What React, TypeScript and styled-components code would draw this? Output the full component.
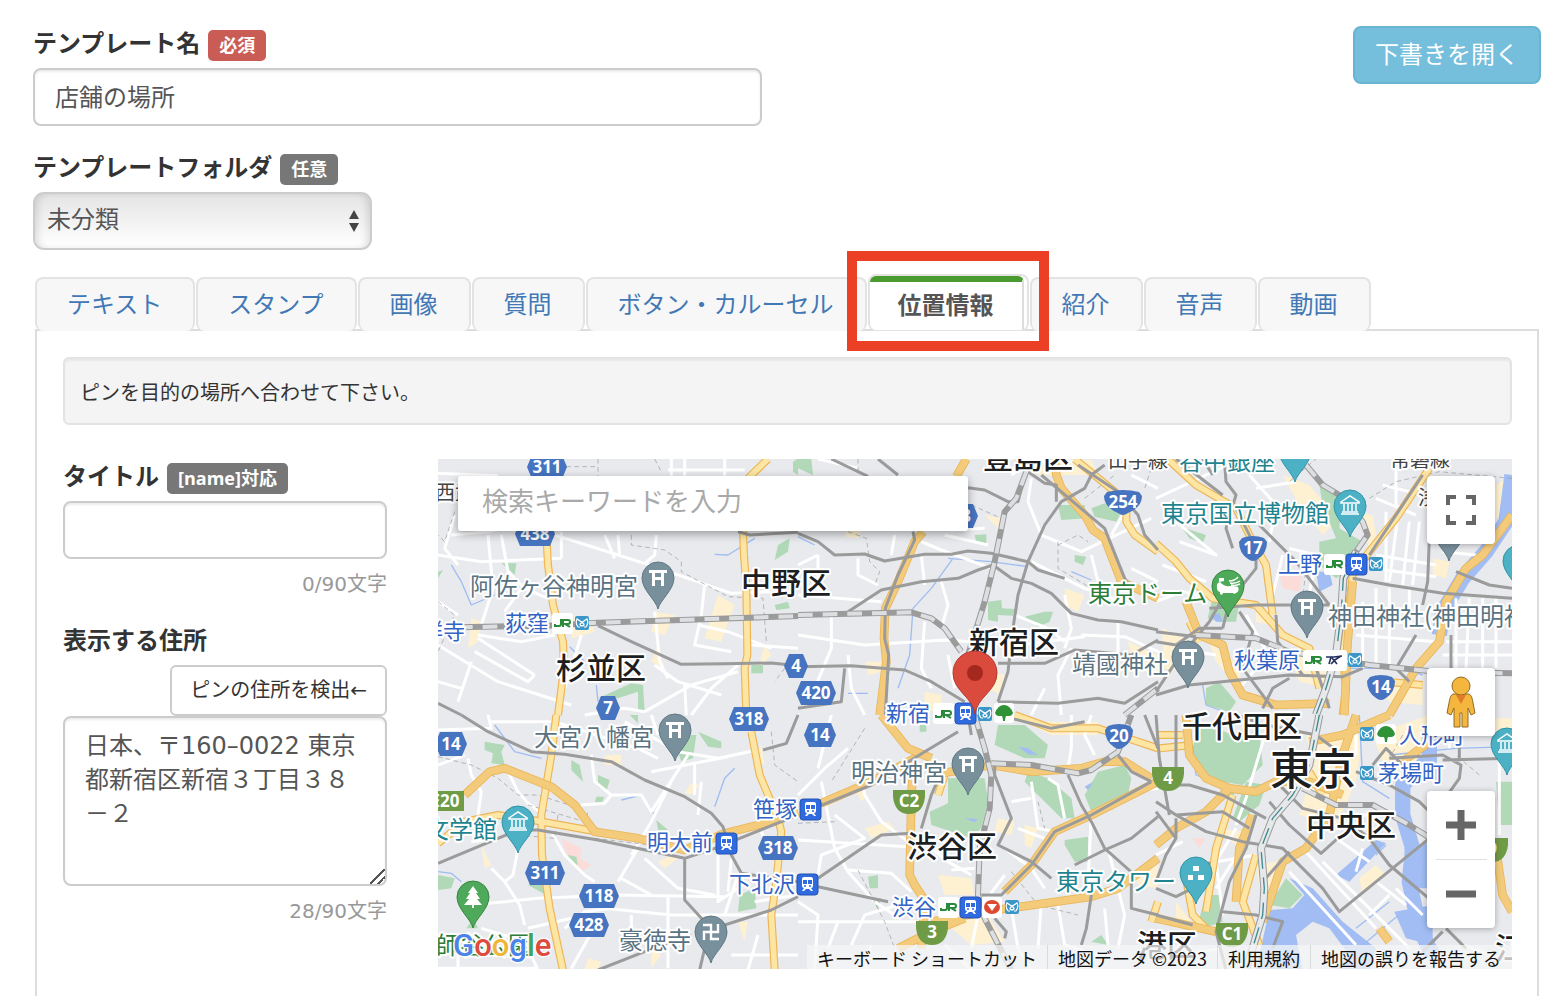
import React, { useState } from "react";
import styled, { createGlobalStyle, css } from "styled-components";

const GlobalStyle = createGlobalStyle`
  *, *::before, *::after { box-sizing: border-box; }
  body {
    margin: 0;
    background: #fff;
    color: #333;
    font-family: "DejaVu Sans", "Noto Sans CJK JP", sans-serif;
    font-size: 24px;
    line-height: 34px;
  }
  button, input, select, textarea { font: inherit; color: inherit; }
`;

/* ---------- form ---------- */

const Page = styled.main`
  display: flex;
  flex-direction: column;
  min-height: 100vh;
  padding: 26px 19px 0 33px;
`;

const Header = styled.header`
  display: flex;
  justify-content: space-between;
  align-items: flex-start;
`;

const HeaderFields = styled.div`
  display: flex;
  flex-direction: column;
  gap: 24px;
  width: 729px;
`;

const FieldHead = styled.div`
  display: flex;
  align-items: flex-start;
  gap: 8px;
  height: 42px;
`;

const FieldLabel = styled.label`
  display: block;
  font-weight: 700;
  line-height: 36px;
`;

const Badge = styled.span<{ $tone?: "danger" | "muted" }>`
  margin-top: 4px;
  padding: 0 11px;
  border-radius: 5px;
  background: ${(p) => (p.$tone === "danger" ? "#c95c54" : "#777")};
  color: #fff;
  font-family: "Open Sans", "Noto Sans CJK JP", sans-serif;
  font-size: 18px;
  font-weight: 700;
  line-height: 31px;
`;

const control = css`
  display: block;
  width: 100%;
  border: 2px solid #ccc;
  border-radius: 8px;
  background: #fff;
  color: #555;
  box-shadow: inset 0 2px 2px rgba(0, 0, 0, 0.075);
  outline: none;
`;

const TextInput = styled.input`
  ${control}
  height: 58px;
  padding: 0 20px 4px;
`;

const TextArea = styled.textarea`
  ${control}
  height: 170px;
  padding: 11px 20px 9px;
  resize: vertical;
  &::-webkit-resizer {
    background: linear-gradient(
      135deg,
      transparent 46%,
      #555 46% 54%,
      transparent 54% 72%,
      #555 72% 80%,
      transparent 80%
    );
  }
`;

const SelectWrap = styled.div`
  position: relative;
  width: 339px;
`;

const Select = styled.select`
  ${control}
  appearance: none;
  height: 58px;
  padding: 0 12px 3px;
  border-radius: 11px;
  background: linear-gradient(#e4e4e4, #fff);
  box-shadow: inset 6px 0 8px -4px rgba(0, 0, 0, 0.14), inset -6px 0 8px -4px rgba(0, 0, 0, 0.14);
`;

const SelectArrows = styled.svg`
  position: absolute;
  right: 12px;
  top: 17px;
  width: 12px;
  height: 24px;
  pointer-events: none;
`;

const DraftButton = styled.button`
  height: 58px;
  padding: 0 20px;
  border: 2px solid #68b4d1;
  border-radius: 8px;
  background: #75bedc;
  color: #fff;
  cursor: pointer;
`;

const Counter = styled.p`
  margin: 10px 0 0;
  color: #999;
  font-size: 20px;
  line-height: 30px;
  text-align: right;
`;

/* ---------- tabs ---------- */

const TabList = styled.ul`
  display: flex;
  align-items: flex-end;
  gap: 1px;
  height: 57px;
  margin: 24px 2px -2px;
  padding: 0;
  list-style: none;
`;

const TabItem = styled.li<{ $active: boolean }>`
  position: relative;
  height: ${(p) => (p.$active ? 57 : 54)}px;
  padding-right: ${(p) => (p.$active ? 3 : 0)}px;
  border: 2px solid #e3e3e3;
  border-bottom-width: ${(p) => (p.$active ? 1 : 0)}px;
  border-radius: 8px;
  background: ${(p) => (p.$active ? "#fff" : "#f7f7f7")};
`;

const TabButton = styled.button<{ $active: boolean }>`
  display: block;
  height: 100%;
  border: 0 solid #ddd;
  border-radius: 6px 6px 0 0;
  padding: 0 31px 0 30px;
  background: none;
  color: #4178b5;
  white-space: nowrap;
  cursor: pointer;
  ${(p) =>
    p.$active &&
    css`
      padding: 0 28px;
      border-top: 6px solid #4a9b2f;
      border-right: 2px solid #ddd;
      color: #555;
      font-weight: 700;
    `}
`;

const TabHighlight = styled.span`
  position: absolute;
  inset: -25px -22px -21px -23px;
  border: 10px solid #ec4026;
  pointer-events: none;
  z-index: 2;
`;

const Panel = styled.section`
  flex: 1;
  margin: 0 2px;
  padding: 26px 25px 27px 26px;
  border: solid #ddd;
  border-width: 2px 2px 0;
`;

const Notice = styled.p`
  margin: 0 0 34px;
  padding: 19px 15px 15px;
  border: 2px solid #e3e3e3;
  border-radius: 6px;
  background: #f4f4f4;
  box-shadow: inset 0 2px 2px rgba(0, 0, 0, 0.05);
  font-size: 20px;
  line-height: 30px;
`;

const Columns = styled.div`
  display: grid;
  grid-template-columns: 324px minmax(0, 1fr);
  gap: 51px;
`;

const Side = styled.div`
  display: flex;
  flex-direction: column;
`;

const AddressHead = styled.div`
  display: flex;
  flex-direction: column;
  gap: 6px;
  margin-top: 24px;
`;

const DetectButton = styled.button`
  align-self: flex-end;
  height: 51px;
  padding: 0 18px 2px;
  border: 2px solid #ccc;
  border-radius: 6px;
  background: #fff;
  font-size: 20px;
  cursor: pointer;
`;

/* ---------- map chrome ---------- */

const MapFrame = styled.div`
  position: relative;
  height: 510px;
  overflow: hidden;
  background: #e8eaed;
`;

const MapCanvas = styled.svg`
  display: block;
  width: 100%;
  height: 100%;
  font-family: "Noto Sans CJK JP", sans-serif;
`;

const SearchInput = styled.input`
  position: absolute;
  left: 20px;
  top: 17px;
  width: 510px;
  height: 55px;
  padding: 0 24px 4px;
  border: 0;
  border-radius: 3px;
  background: #fff;
  font-size: 26px;
  box-shadow: 0 3px 10px rgba(0, 0, 0, 0.35);
  outline: none;
  &::placeholder { color: #a9a9a9; opacity: 1; }
`;

const Controls = styled.div`
  position: absolute;
  right: 17px;
  top: 17px;
  bottom: 41px;
  display: flex;
  flex-direction: column;
`;

const ControlCard = styled.div<{ $push?: boolean }>`
  display: flex;
  flex-direction: column;
  margin-top: ${(p) => (p.$push ? "auto" : "0")};
  border-radius: 4px;
  background: #fff;
  box-shadow: 0 1px 6px rgba(0, 0, 0, 0.3);
  & + & + & { margin-top: 55px; }
`;

const ControlButton = styled.button`
  display: grid;
  place-items: center;
  width: 68px;
  height: 68px;
  padding: 0;
  border: 0;
  background: none;
  cursor: pointer;
`;

const Divider = styled.hr`
  width: 51px;
  height: 1px;
  margin: 0 auto;
  border: 0;
  background: #e0e0e0;
`;

const Attribution = styled.div`
  position: absolute;
  right: 0;
  bottom: 0;
  display: flex;
  height: 24px;
  padding: 0 1px 0 0;
  background: rgba(245, 245, 245, 0.75);
  color: #111;
  font-family: "Noto Sans CJK JP", sans-serif;
  font-size: 18px;
  line-height: 26px;
  white-space: nowrap;
  a { color: inherit; text-decoration: none; }
  button { padding: 0; border: 0; background: none; line-height: inherit; }
  > * { padding: 0 10px; }
  > * + * { border-left: 1px solid rgba(0, 0, 0, 0.1); }
`;

const Credit = styled.span`
  display: block;
`;

const Logo = styled.div`
  position: absolute;
  left: 15px;
  bottom: 6px;
  font-family: Roboto, sans-serif;
  font-size: 31px;
  font-weight: 500;
  line-height: 34px;
  text-shadow: 0 0 2px #fff, 1px 1px 1px #fff, -1px -1px 1px #fff, 1px -1px 1px #fff, -1px 1px 1px #fff;
`;

const Letter = styled.span<{ $c: string }>`
  color: ${(p) => p.$c};
`;

/* ---------- map data: six sheets, three units to one screen pixel ---------- */

interface Sheet {
  x: number;
  y: number;
  urban: string;
  pink?: string;
  park: string;
  water?: string;
  river?: string;
  stream?: string;
  minor: string;
  arterial: string;
  motorway: string;
  rail: string;
  jr: string;
  express?: string;
  border: string;
}

const sheets: Sheet[] = [
  {
    x: 0,
    y: -12,
    urban:
      "M650 470L710 480L680 540L640 530ZM840 420L890 450L850 560L800 550ZM660 570L680 640L640 620ZM100 490L130 500L120 560L90 580ZM410 480L460 500L470 530L400 550ZM980 570L1000 600L960 640Z",
    park: "M1020 270L1055 250L1050 290L1010 315ZM1010 450L1050 440L1055 460L1015 465ZM480 730L580 685L615 690L620 770L600 770L600 710L540 730ZM190 325H235L230 360L215 345ZM940 630H975V655H940ZM1065 20L1080 10V60L1065 50ZM0 350L15 345L0 370Z",
    stream: "M830 298L870 300L950 250M40 330L70 380L100 450L170 420M395 575L440 620M475 690L480 740",
    minor:
      "M0 55L180 62M40 240L150 230L330 190M0 300L130 320L370 310M370 230V310M150 240L165 400L130 510M350 240L620 325L880 415L1000 410M700 12V64M740 12V64M860 12V64M690 45H920M500 240L530 310M540 240L545 300M655 240L650 300L620 325M800 390L790 480L770 570L880 590M650 470L665 620L690 670M650 630L720 680L850 720M0 570L180 680L400 750M120 550L290 660M290 660L270 680L110 590M100 620L60 740M0 680L70 700M430 540L400 640L380 700M780 510L870 530L1000 580M940 570L1080 580M900 630L820 700L760 780M440 780L560 760L620 770M190 240L210 350L260 400L330 430M0 440L60 480M250 400L200 470M350 540L250 560L120 540M50 180L20 280L60 330M740 690L745 780M620 770L760 690L900 650",
    arterial:
      "M990 12L930 70L915 230L918 300L925 400L928 600L920 640L925 780M325 240L330 330L345 450L375 560L378 640L360 780",
    motorway: "",
    rail: "M480 512L580 560L730 628L860 626L1000 624L1080 632M0 745L70 780M900 230L935 240L1080 232",
    jr: "M60 517L330 512L480 503L1080 483",
    border:
      "M480 12V70M385 35H480M650 12L670 50M580 240V270L680 285L730 320V350L870 425L975 430L985 560M50 170L20 260L0 240M0 440L50 480L0 590M1040 640L1010 680",
  },
  {
    x: 1080,
    y: -12,
    urban:
      "M560 180L610 190L600 220ZM800 400L860 420L840 470L800 450ZM200 620H250V650L210 660ZM380 710L430 720V760L380 770ZM580 650L620 660L610 720L570 700ZM990 560L1080 600V660L1010 640ZM150 220L190 225L180 250L140 245ZM720 15H880L900 60H720Z",
    park: "M530 240L565 238V270L535 262ZM780 150H860L865 190L790 195ZM880 160L920 145L970 170L955 200L890 185ZM570 440L610 435L612 460L650 462L645 482L600 480V500L570 495ZM680 485L740 470H765L755 500L720 515ZM830 300L865 305L855 330L830 320ZM0 12H40L45 60L0 40Z",
    stream: "M450 310L580 320L690 335M465 310L400 400L345 460L335 600L300 700M820 350L880 375M0 245L50 270M150 715H210",
    minor:
      "M370 260L430 285L580 340M370 300L380 390M440 240L570 270M700 70L690 140L730 240L850 290L1060 190M980 170L940 240M560 220L460 225M0 420L250 440M0 540L200 570L440 555L660 570L860 545M100 470V580L50 700M380 500L370 640L400 700M430 380L450 450L430 520M650 480L750 520L800 560M800 420L820 520L800 580M850 540L980 545L1080 590M960 500V600M820 580L780 660L790 780M740 700L700 780M150 600L160 700L200 780M640 60L700 20H830M880 300L900 380L880 420M1000 340L1080 380M60 12L180 40M60 300V420M180 310V360L240 390M0 330L60 300M450 600L470 700M290 240L280 300M1000 60L1080 100M700 320L860 400L1000 450",
    arterial: "M830 12L950 110L985 150V200L1010 240L1080 290",
    motorway:
      "M505 12L475 64M375 230L350 260L300 380L262 460L258 550L265 620L245 780M770 12L775 60L790 100L860 180L885 225L920 250L970 380L1080 430",
    rail: "M345 230L350 255L300 360L262 460L260 550L272 600L262 780M100 12L210 64M240 12L300 60M510 98L560 105L630 140H660L680 60M690 50L740 85L775 90V140M920 30L880 60L860 100L790 140L740 210L690 320L660 420L645 520L630 650L600 740M730 60L920 220L980 370L1000 400M840 30L960 110L1020 180L1040 240L1080 285M0 235L60 260L110 300L200 297L260 318L380 298H460L510 288L580 295L690 320L720 345L800 370M150 470L250 405L370 380L480 370L540 345L585 330L640 370L700 385L760 415L820 475L900 495L970 500L1080 525M0 635L160 632L320 645L400 680L500 740M140 640L130 740L0 760M600 625H740L830 585L1000 600L1080 555M600 740L780 745L900 730L980 745L1080 680",
    jr: "M685 50L655 130L620 170L590 320L560 440L510 600M0 480L340 472L400 490L440 520L490 590M980 780L1080 700",
    border:
      "M180 12V50M150 230L205 250L215 320L245 350L230 390M520 150L610 190L600 260M780 260V340L880 400M780 270L840 240L870 260M860 130L950 60M1060 40L1040 100",
  },
  {
    x: 2154,
    y: -12,
    urban:
      "M380 60L460 90L520 160L540 200L500 240L430 150ZM600 170L650 180L660 240L640 280L610 200ZM390 580L500 600L520 700L430 680ZM830 310L880 320L870 370L830 360ZM970 120L1068 60V150L1010 200ZM20 520L110 560L90 650L20 640ZM650 670L800 700V750L700 740ZM300 470L340 460V510L300 500ZM160 560L260 640L240 690L180 620Z",
    pink: "M370 360L440 355L430 410L380 400Z",
    park: "M490 90L560 130L550 220L620 260L590 340L540 370L490 330V260L540 250L500 150ZM75 215L150 240L140 265L100 250ZM170 430L250 440L240 500H190L155 490ZM1068 180L990 270L960 310L1000 300L1068 210ZM150 700L190 680L240 740L220 770L150 750Z",
    water: "M480 350H520L530 390L490 410ZM165 480L190 475L200 500L180 500Z",
    river: "M1068 60L1050 200L990 290L920 370L860 470L850 540",
    stream: "M140 690L150 750L230 780M560 640H740L800 660",
    minor:
      "M690 170V380M730 150L700 380M760 200L740 390M790 200L770 390M660 300L840 330M650 340L840 365M600 480L850 520M600 540L840 560M620 440V640M660 400V640M700 400V640M760 400V520M900 430V640M940 430L930 640M980 430V640M1020 430V640M870 560H1068M860 600H1068M860 500H1068M0 130L150 60L260 12M20 330L150 380M60 200L180 300L70 260M280 60L360 150L340 260M300 100L420 80M400 280L480 300L460 420M380 300L350 420M0 440L80 410L200 440M60 580L180 600M270 480L360 640M900 100L1000 120M860 290L960 300M250 700L300 640M660 130L780 180M680 90L760 110M720 40V160",
    arterial:
      "M35 12L120 90L240 160L290 260L330 330L350 480M0 265L60 320L100 370L170 430L300 450L380 540L460 580L490 700M820 40L720 190L640 290L590 360L575 500L560 600L570 700L560 780M690 680L800 690M100 500L130 560",
    motorway:
      "M90 440L130 540L200 570L220 650L260 720L360 750L520 745M1068 180L980 300L930 340L870 440L850 560L780 640L700 780M590 380L575 560L565 780",
    rail: "M205 12L210 80L240 120L210 220L230 280M60 12L200 120M310 210L420 320L520 450M590 370L700 390L860 415L1068 430M820 250L815 380L800 450M0 530L120 545M0 710L60 620L160 500L200 430M160 460L300 450L520 450M200 520L220 440L300 340V280L240 160M360 480L365 560L440 660M0 720L100 690L400 660L560 665L620 640M260 640L350 760M900 350L1000 390L1068 400M885 540V640M800 60L640 300M780 540L720 640L760 680M320 760L350 700L400 670M250 470L290 530L260 640M0 560L60 570L130 520L200 520M140 12L170 60M480 640L520 760",
    jr: "M450 30L500 90L550 120L620 200L635 240L600 290L565 370L555 480L540 600M120 540L300 550L400 590L640 630L840 650L1068 655",
    express: "M600 290L562 370L555 480L540 600L510 700L480 780",
    border: "M400 80L480 12M640 130L720 80L850 50L1068 70M450 330L440 440",
  },
  {
    x: 0,
    y: 768,
    urban:
      "M130 390L160 450L140 460ZM760 205L785 210L760 240L740 235ZM450 730L490 740L480 765H440ZM970 90L980 150L950 130ZM900 620H930L920 680ZM640 700L670 720L640 760ZM500 120H550V150H500ZM660 440L700 420L720 430L680 460Z",
    pink: "M370 370L430 400L425 430L460 450L430 470L390 430Z",
    park: "M140 80L200 90L190 110L200 150L160 145L165 115L140 105ZM400 135L425 150L435 200L400 165ZM480 180L515 195L505 230L480 215ZM720 110L760 60H775L765 130L730 140ZM780 50L850 80V100L810 95ZM475 245H500L490 265H470ZM655 315L690 345H660ZM905 540L950 520L955 580L900 590ZM0 480L50 490L40 520L0 525ZM270 510L320 490L325 540ZM575 0H600V25ZM390 420L415 425L420 450L400 445ZM85 640L105 610L120 640Z",
    stream: "M0 470L40 475L70 500M890 160L860 190L830 275M550 255L610 240L650 300M170 30L230 110L310 130",
    minor:
      "M150 0L160 40L0 45M90 130L100 180L130 230L120 300M200 150L240 230L270 265L320 300M460 120L470 200L520 240L500 265L430 270M520 240H610L640 290L750 120M350 20L600 100L660 130M560 20L720 110L840 130L960 105M640 170L870 125M770 140V240M580 420L640 320L700 200M240 400L225 480L200 500M160 460L200 500L245 570L260 630M150 565L300 550L540 540L860 545M340 350L380 420L440 480L470 500M380 640L440 590L520 580M500 580L700 600H1080M550 490L640 540M270 640L400 610M400 760L490 600M540 500L600 400M690 540V760M620 430L720 520L830 540M840 420V560L900 520M880 430L870 530M900 480L860 600M950 560L1080 540M960 660L930 765M880 720H1080M0 760H300M60 720V765M130 640L260 680L300 765M580 600V700M790 200L780 300M970 350L1000 420M100 380L180 370M0 150L80 120M160 20L340 20M640 0L660 60",
    arterial:
      "M355 0L340 120L310 300L312 420L335 580L375 765M0 385L80 320L180 300L300 318L450 345L480 350M940 50L965 180L1020 310L1030 350L1015 500L1000 600L1010 765",
    motorway: "M80 240L155 170L200 160L340 215L410 270L470 350L600 370L740 405L860 355L980 325L1080 290",
    rail: "M70 0L150 50L280 110L380 118L520 140L620 195L740 245L820 295L855 335L880 420L910 475L1080 500M0 445L240 345H300L480 375L740 430L830 400L1080 300M740 430V555L800 620M480 765L620 710L760 660M860 630L1000 585L1080 545M800 700L785 765M1080 0L1045 85L975 105",
    jr: "",
    border:
      "M0 125L100 150L180 190L240 240H300L440 285M270 270L440 320L450 290M360 300L350 370L240 360M470 370L640 390M1000 50L1010 150L1080 200",
  },
  {
    x: 1080,
    y: 768,
    urban:
      "M200 340L270 320L290 340L220 370ZM420 480L520 490L530 540H440ZM460 600H570L620 680L520 690L460 640ZM680 330L720 340L700 400L680 390ZM1010 480L1080 450V520L1020 510ZM170 220L210 240L190 260ZM600 310L650 320L640 360L590 350ZM680 20H900V60H760Z",
    park: "M600 30H680L750 90L740 130H680L590 90ZM450 190H560L570 260L550 340L520 370L400 330L395 290L450 265ZM690 170L750 190L820 250L830 310H790L750 270L680 200ZM860 240L900 170L980 150L1000 190L990 240L880 290ZM800 375L870 365V440H830L800 390ZM210 485L240 480V520H215ZM220 550H250L240 580ZM365 30H385V50H365ZM880 680L910 660L930 690Z",
    water: "M660 95L690 100L720 120L690 118ZM500 310L540 312L530 322ZM860 215L885 200L870 225Z",
    minor:
      "M0 375L330 395M70 200L110 400L150 470L230 560L290 600M0 240L80 160L150 100M100 0L60 160M190 180L200 240L250 320L330 380M110 300L200 370L70 420L60 480M150 465L280 475L340 530M0 620H380M0 560L60 600L50 765M160 690L200 600L300 570M400 400L450 440L520 480M460 465L530 460M620 400L700 460L740 520M660 340L740 370M700 200L720 340L770 350M820 0V100L810 160M880 0L860 60L890 120M640 260L700 250M640 580L660 700L700 765M540 600L520 700M730 560L720 700M780 570L800 690L900 720M880 300L870 500M930 400L980 600L960 700M620 480L560 560M1000 230L1080 220M920 580L930 690M200 765L220 690M440 690L520 765M750 190L780 210L800 310M120 620L90 700",
    arterial: "M650 0L760 40H900L960 60L1080 100M440 180L420 240M1080 560L1060 620",
    motorway:
      "M250 0L330 100L400 130M345 130L340 260L335 480L350 510L390 570L375 620L370 700M70 265L210 205L350 130M400 620L560 590L880 545L960 520L1080 430M300 700L400 650L500 610M400 180L580 150L700 170L850 160L920 140H980L1060 190M1080 200L880 300L770 350L700 450L620 530",
    rail: "M60 275L220 210L380 110L480 50M60 490L250 360L340 355M60 515L270 560M430 170L400 240L370 340M590 150V180L640 310L600 390L700 440L760 490M1060 200L880 300L770 350L700 450L610 540H550M590 610L625 650L620 670M810 180L850 270L880 320L920 400L1010 480M830 450L920 405L1000 370L1080 305M960 120L1000 170L1060 200M880 540L865 640L850 690M510 0L520 60M1000 500V580L1080 600M640 10L760 40L860 20M1040 0L1080 100",
    jr: "M530 0L560 100L580 180L575 280L545 400L540 540L560 610L640 765M580 145L700 150L840 175L880 165L960 110L1000 0",
    border: "M0 325L110 320M200 40L100 200M180 465L260 620L290 700M720 260L740 340M640 470L720 570L840 600",
  },
  {
    x: 2154,
    y: 768,
    urban:
      "M450 60H620L600 200L540 330L430 300L470 160ZM610 490L660 450L690 480L620 540ZM180 340L270 350L250 400ZM60 560L120 640H60ZM650 60L820 0L780 140H680ZM940 10H1068V60H940ZM300 450L360 440L380 500L320 580Z",
    pink: "M110 370H150L130 400Z",
    park: "M130 20L230 60L310 50L320 150L260 210L200 200L130 180L110 100ZM270 200L330 210L310 270L250 320L230 310ZM150 540H190L200 620L140 640L130 610ZM390 490L440 540L400 580L340 570ZM1020 200H1068V330H1030ZM180 240L230 220L240 260Z",
    water:
      "M340 585L410 580L445 540L400 490L470 520L560 620L660 700L640 765H540L580 720L520 640L470 620L420 660L440 765H300ZM660 375L690 385L580 500L540 480ZM715 590L830 570V690L750 670ZM745 400L830 380V520H765Z",
    river: "M820 60V130L740 210V300L770 400L760 500L790 640L830 720",
    stream: "M700 120L900 100L1068 95M610 0L620 200L700 250M110 90L120 180L200 210L260 215M660 420L690 390M600 640L700 560M620 690L740 590M840 60V200",
    minor:
      "M180 440L300 420M400 470L600 690M440 400L660 640M500 440L760 700M560 300H700M540 370L640 440M620 400L600 470M80 380L0 420M240 340L180 440L200 600M330 50L270 250L240 330M0 730L200 700M920 690L1068 740M660 500L750 570M720 520L800 600M1030 100V360M880 0V100M600 20V120M280 360L180 520M700 540L640 600M1000 20V60",
    arterial:
      "M90 490L110 600L150 640M230 240L180 400L150 590M10 100L110 90M300 420L260 560L310 690M460 170L500 240M0 60H80",
    motorway:
      "M90 0L100 120L150 190L220 220L150 290L60 340L0 390M220 220L300 230L360 200H460L560 240M540 210L520 300L450 400L380 440L320 620M460 80L560 60L700 0M0 610L180 650M1020 400L1040 540L1068 590M670 640L700 680M740 140L820 80M600 0L560 120L520 300M290 300L250 400L240 560",
    rail: "M0 0L10 130L40 300M0 210H100L200 240L330 310M0 260L60 300L200 290L280 340M0 290L60 370M60 300L150 350L260 380L380 400L500 520L550 590L820 370M60 310V370L30 420L0 500M340 260L400 330L495 415L590 330L640 370L700 450L830 560M240 0L330 30L480 60L560 120M300 300L270 400L220 500L180 650L210 765M0 520L60 545L150 500L160 440M860 650L800 710M870 640L930 700M600 170L700 210L790 260L830 300M700 130L860 120L915 150L910 190L860 260M200 590L300 600L380 620L350 700M400 410L320 500M860 135L1068 130M0 600L110 630M650 150L690 100L740 150M910 0V140M60 200V0M360 200L440 280L560 310",
    jr: "M440 220L540 270H650L760 330L840 380",
    express: "M490 0L460 150L410 240L350 310L315 400L325 520L320 600L270 765",
    border: "M740 60L700 130M970 180L900 120",
  },
];

type Layer = Exclude<keyof Sheet, "x" | "y">;

const Layered = ({ of, ...paint }: { of: Layer } & React.SVGProps<SVGPathElement>) => (
  <>
    {sheets.map((s) =>
      s[of] ? <path key={`${s.x}-${s.y}`} d={s[of]} transform={`translate(${s.x} ${s.y})`} {...paint} /> : null
    )}
  </>
);

type Place = [text: string, x: number, cy: number, kind: PlaceKind, size?: number];
type PlaceKind = "ward" | "poi" | "museum" | "park" | "station" | "line";

const placeStyle: Record<PlaceKind, { fill: string; size: number; weight: number }> = {
  ward: { fill: "#1d1e20", size: 30, weight: 500 },
  poi: { fill: "#5a7382", size: 24, weight: 400 },
  museum: { fill: "#1f848f", size: 24, weight: 400 },
  park: { fill: "#2c7d37", size: 24, weight: 400 },
  station: { fill: "#3263c4", size: 22, weight: 400 },
  line: { fill: "#444", size: 20, weight: 400 },
};

const places: Place[] = [
  ["豊島区", 983, 457, "ward"],
  ["中野区", 741, 583, "ward"],
  ["杉並区", 556, 668, "ward"],
  ["新宿区", 969, 642, "ward"],
  ["渋谷区", 907, 846, "ward"],
  ["千代田区", 1182, 726, "ward"],
  ["中央区", 1306, 825, "ward"],
  ["港区", 1137, 945, "ward"],
  ["東京", 1270, 769, "ward", 43],
  ["江", 1495, 948, "ward"],
  ["阿佐ヶ谷神明宮", 470, 586, "poi"],
  ["大宮八幡宮", 534, 737, "poi"],
  ["明治神宮", 851, 772, "poi"],
  ["豪徳寺", 619, 940, "poi"],
  ["靖國神社", 1072, 664, "poi"],
  ["神田神社(神田明神)", 1328, 616, "poi"],
  ["東京国立博物館", 1161, 513, "museum"],
  ["谷中銀座", 1179, 461, "museum"],
  ["文学館", 425, 829, "museum"],
  ["東京タワー", 1056, 881, "museum"],
  ["東京ドーム", 1088, 593, "park"],
  ["師谷公園", 436, 945, "park"],
  ["荻窪", 505, 623, "station"],
  ["祥寺", 421, 631, "station"],
  ["新宿", 886, 713, "station"],
  ["上野", 1278, 564, "station"],
  ["秋葉原", 1234, 660, "station"],
  ["人形町", 1399, 735, "station"],
  ["茅場町", 1378, 773, "station"],
  ["笹塚", 753, 809, "station"],
  ["明大前", 647, 842, "station"],
  ["下北沢", 729, 884, "station"],
  ["渋谷", 892, 907, "station"],
  ["西武", 435, 492, "line"],
  ["山手線", 1108, 460, "line"],
  ["常磐線", 1390, 459, "line"],
  ["浅", 1418, 497, "line"],
];

const prefectural: [string, number, number][] = [
  ["311", 547, 467],
  ["438", 535, 534],
  ["8", 966, 516],
  ["4", 796, 666],
  ["420", 816, 693],
  ["7", 608, 708],
  ["318", 749, 719],
  ["14", 820, 735],
  ["14", 451, 744],
  ["318", 778, 848],
  ["311", 545, 873],
  ["118", 599, 896],
  ["428", 589, 925],
];
const national: [string, number, number][] = [
  ["254", 1123, 502],
  ["17", 1253, 548],
  ["14", 1381, 687],
  ["20", 1119, 736],
];
const expressway: [string, number, number][] = [
  ["C2", 909, 801],
  ["3", 932, 932],
  ["4", 1168, 778],
  ["C1", 1232, 934],
  ["9", 1492, 849],
];

type Glyph = "torii" | "museum" | "tree" | "manji" | "dots" | "dome" | "none";
const pins: [Glyph, number, number, string, string][] = [
  ["torii", 658, 578, "#78909c", "#5f7683"],
  ["torii", 675, 730, "#78909c", "#5f7683"],
  ["torii", 968, 764, "#78909c", "#5f7683"],
  ["manji", 711, 932, "#78909c", "#5f7683"],
  ["torii", 1188, 657, "#78909c", "#5f7683"],
  ["torii", 1307, 607, "#78909c", "#5f7683"],
  ["none", 1449, 530, "#78909c", "#5f7683"],
  ["museum", 518, 822, "#4db1c6", "#2f93a8"],
  ["museum", 1350, 506, "#4db1c6", "#2f93a8"],
  ["none", 1295, 451, "#4db1c6", "#2f93a8"],
  ["museum", 1507, 744, "#4db1c6", "#2f93a8"],
  ["none", 1519, 561, "#4db1c6", "#2f93a8"],
  ["dots", 1196, 873, "#4db1c6", "#2f93a8"],
  ["tree", 473, 897, "#4fa95a", "#35853f"],
  ["dome", 1228, 586, "#4fa95a", "#35853f"],
];

const PinGlyph = ({ kind }: { kind: Glyph }) => {
  switch (kind) {
    case "torii":
      return <path d="M-9 -8H9V-5H6V8H3V2H-3V8H-6V-5H-9ZM-3 -5V-1H3V-5Z" fill="#fff" fillRule="evenodd" />;
    case "museum":
      return (
        <path
          d="M-9 -4L0 -10L9 -4V-3H-9ZM-8 6H8M-9 8H9M-6 -2V5M-2 -2V5M2 -2V5M6 -2V5"
          fill="none"
          stroke="#fff"
          strokeWidth="1.5"
        />
      );
    case "tree":
      return <path d="M0 -11L5 -4H3L7 2H4L9 8H1V11H-1V8H-9L-4 2H-7L-3 -4H-5Z" fill="#fff" />;
    case "manji":
      return <path d="M-8 -7H0V7H8M-7 8V0H7V-8" fill="none" stroke="#fff" strokeWidth="2.4" />;
    case "dots":
      return <path d="M-3 -7H3V-2H-3ZM-8 2H-3V7H-8ZM2 2H8V7H2Z" fill="#fff" />;
    case "dome":
      return (
        <>
          <path
            d="M-11 2Q-12 -3 -8 -4Q-4 1 2 0Q8 0 10 1Q12 5 8 7L6 8L5 7H-5L-6 9L-8 8V6Q-11 5 -11 2ZM-9 -8H-4V-5L-9 -4Z"
            fill="#fff"
          />
          <path d="M1 -5Q7 -5 10 -9M2 -3Q8 -2 12 -5M3 -1Q8 0 12 -2" fill="none" stroke="#fff" strokeWidth="1.4" />
        </>
      );
    default:
      return null;
  }
};

const trains: [number, number][] = [
  [1356, 564],
  [965, 713],
  [810, 809],
  [726, 843],
  [807, 884],
  [970, 907],
];
const metros: [number, number][] = [
  [582, 623],
  [985, 714],
  [1376, 564],
  [1355, 660],
  [1367, 734],
  [1367, 773],
  [1012, 907],
];
const jrMarks: [number, number][] = [
  [562, 623],
  [943, 714],
  [1334, 564],
  [1313, 660],
  [948, 907],
];

/* white plates behind the operator marks: x, y, width */
const plates: [number, number, number][] = [
  [552, 613, 21],
  [933, 703, 21],
  [1324, 554, 21],
  [1303, 650, 44],
  [938, 897, 21],
  [982, 897, 20],
];

const CityMap = () => (
  <MapCanvas viewBox="0 0 3222 1530" preserveAspectRatio="xMidYMid slice" role="img" aria-label="地図">
    <g strokeLinejoin="round" strokeLinecap="butt">
      <Layered of="urban" fill="#fdf1d2" />
      <Layered of="pink" fill="#fbdcd9" />
      <Layered of="park" fill="#b1d9b8" />
      <Layered of="water" fill="#a1bdf3" />
      <Layered of="river" fill="none" stroke="#a1bdf3" strokeWidth="46" />
      <Layered of="stream" fill="none" stroke="#9fbdf2" strokeWidth="4" />
      <Layered of="minor" fill="none" stroke="#fff" strokeWidth="9" />
      <Layered of="border" fill="none" stroke="#999" strokeWidth="2" strokeDasharray="14 10" />
      <Layered of="arterial" fill="none" stroke="#edb557" strokeWidth="24" />
      <Layered of="arterial" fill="none" stroke="#fde6a4" strokeWidth="17" />
      <Layered of="motorway" fill="none" stroke="#e9b558" strokeWidth="26" />
      <Layered of="motorway" fill="none" stroke="#f3cb7b" strokeWidth="21" />
      <Layered of="rail" fill="none" stroke="#9b9b9b" strokeWidth="9" />
      <Layered of="jr" fill="none" stroke="#9b9b9b" strokeWidth="18" />
      <Layered of="jr" fill="none" stroke="#dcdee1" strokeWidth="12" strokeDasharray="44 30" />
      <Layered of="express" fill="none" stroke="#9b9b9b" strokeWidth="24" />
      <Layered of="express" fill="none" stroke="#e6e8ea" strokeWidth="18" />
      <Layered of="express" fill="none" stroke="#3d8a90" strokeWidth="4" strokeDasharray="50 26" />
    </g>

    <g transform="scale(3) translate(-438 -459)">
      {plates.map(([x, y, w]) => (
        <rect key={`${x}-${y}`} x={x} y={y} width={w} height="21" rx="3" fill="#fff" />
      ))}

      {pins.map(([kind, x, y, fill, edge]) => (
        <g key={`${x}-${y}`} transform={`translate(${x} ${y})`}>
          <path
            d="M0 31C-2 22 -16 12 -16 0A16 16 0 1 1 16 0C16 12 2 22 0 31Z"
            fill={fill}
            stroke={edge}
            strokeWidth="1"
          />
          <PinGlyph kind={kind} />
        </g>
      ))}

      {places.map(([text, x, cy, kind, size]) => {
        const look = placeStyle[kind];
        const px = size ?? look.size;
        return (
          <text
            key={text}
            x={x}
            y={cy + Math.round(px * 0.38)}
            fontSize={px}
            fontWeight={look.weight}
            fill={look.fill}
            stroke="#fff"
            strokeWidth="4"
            strokeLinejoin="round"
            paintOrder="stroke"
          >
            {text}
          </text>
        );
      })}

      <g fontFamily="Open Sans, sans-serif" fontSize="17" fontWeight="700" fill="#fff" textAnchor="middle">
        {prefectural.map(([n, x, y]) => {
          const w = 7 + n.length * 4;
          return (
            <g key={`${x}-${y}`} transform={`translate(${x} ${y})`}>
              <path d={`M${-w + 4} -12H${w - 4}L${w + 1} 0L${w - 4} 12H${-w + 4}L${-w - 1} 0Z`} fill="#4674c0" />
              <text y="6">{n}</text>
            </g>
          );
        })}
        {national.map(([n, x, y]) => {
          const w = n.length > 2 ? 19 : 14;
          return (
            <g key={`${x}-${y}`} transform={`translate(${x} ${y})`}>
              <path
                d={`M${-w + 3} -10Q0 -14 ${w - 3} -10L${w} -6Q${w} 5 5 11Q0 15 -5 11Q${-w} 5 ${-w} -6Z`}
                fill="#4674c0"
              />
              <text y="6">{n}</text>
            </g>
          );
        })}
        {expressway.map(([n, x, y]) => (
          <g key={`${x}-${y}`} transform={`translate(${x} ${y})`}>
            <path d="M-16 -11H16V-4Q14 13 0 13Q-14 13 -16 -4Z" fill="#6f9b46" />
            <text y="6">{n}</text>
          </g>
        ))}
        <rect x="430" y="791" width="34" height="20" fill="#6f9b46" />
        <text x="445" y="807">E20</text>
      </g>

      {trains.map(([x, y]) => (
        <g key={`${x}-${y}`} transform={`translate(${x} ${y})`}>
          <rect x="-10" y="-10" width="21" height="21" rx="3" fill="#2f6ade" stroke="#2453b4" />
          <path
            d="M-3 -7H4Q6 -7 6 -5V2Q6 4 4 4L6 7H4L2 5H-1L-3 7H-5L-3 4Q-5 4 -5 2V-5Q-5 -7 -3 -7ZM-4 -4V0H0V-4ZM1 -4V0H5V-4Z"
            fill="#fff"
            fillRule="evenodd"
          />
          <path d="M-3 2H-1M2 2H4" stroke="#2f6ade" strokeWidth="1.4" />
        </g>
      ))}

      {metros.map(([x, y]) => (
        <g key={`${x}-${y}`} transform={`translate(${x} ${y})`}>
          <rect x="-7" y="-7" width="14" height="14" rx="2" fill="#3a97c8" />
          <path
            d="M-4 4Q-7 0 -5 -4L-2 -2Q0 0 2 -2L5 -4Q7 0 4 4M-4 4H-2M4 4H2M-2 2Q-2 0 0 0Q2 0 2 2Q0 4 -2 2"
            fill="none"
            stroke="#fff"
            strokeWidth="1.2"
          />
        </g>
      ))}

      {jrMarks.map(([x, y]) => (
        <path
          key={`${x}-${y}`}
          transform={`translate(${x} ${y})`}
          d="M-1 -4V1Q-1 3 -3 3H-7V1M1 4V-3H6Q8 -3 8 -1Q8 1 6 1H3L8 4"
          fill="none"
          stroke="#2a8a3b"
          strokeWidth="2"
        />
      ))}
      <path
        d="M1326 657H1334L1342 656M1331 657L1329 664M1332 658L1337 664M1341 656Q1335 659 1331 664"
        fill="none"
        stroke="#24305e"
        strokeWidth="1.6"
      />
      <ellipse cx="992" cy="907" rx="8" ry="7" fill="#dc4a32" />
      <path d="M987 904H997L992 911Z" fill="#fff" />
      {[
        [1004, 713],
        [1386, 734],
      ].map(([x, y]) => (
        <g key={x} transform={`translate(${x} ${y})`}>
          <rect x="-10" y="-10" width="20" height="20" rx="3" fill="#fff" />
          <path d="M-9 0Q-6 -8 0 -8Q6 -8 9 0Q8 3 5 3H2Q1 5 1 8H-1Q-1 5 -2 3H-5Q-8 3 -9 0Z" fill="#2f9237" />
        </g>
      ))}

      <g transform="translate(975 673)">
        <path
          d="M0 41C-2 24 -22 18 -22 0A22 22 0 1 1 22 0C22 18 2 24 0 41Z"
          fill="#da4b3e"
          stroke="#b23a30"
          strokeWidth="1"
        />
        <circle r="8" fill="#a5281f" />
      </g>
    </g>
  </MapCanvas>
);

const FullscreenIcon = () => (
  <svg width="30" height="30" viewBox="0 0 30 30" fill="none" stroke="#666" strokeWidth="4" aria-hidden="true">
    <path d="M2 10V2H10M20 2H28V10M28 20V28H20M10 28H2V20" />
  </svg>
);

const Pegman = () => (
  <svg width="30" height="52" viewBox="0 0 30 52" aria-hidden="true">
    <path
      d="M7 18H23Q26 19 27 27L29 37L25 39L22 32V51H16V37H14V51H8V32L5 39L1 37L3 27Q4 19 7 18Z"
      fill="#f5b63e"
      stroke="#8f6c27"
      strokeWidth="1"
    />
    <circle cx="15" cy="10" r="9" fill="#f5b63e" stroke="#8f6c27" />
    <path d="M10 19H20L15 28Z" fill="#df7c2c" />
  </svg>
);

const tabs = ["テキスト", "スタンプ", "画像", "質問", "ボタン・カルーセル", "位置情報", "紹介", "音声", "動画"];

export default function App() {
  const [active, setActive] = useState("位置情報");
  const [name, setName] = useState("店舗の場所");
  const [title, setTitle] = useState("");
  const [address, setAddress] = useState("日本、〒160–0022 東京都新宿区新宿３丁目３８－２");

  return (
    <>
      <GlobalStyle />
      <Page>
        <Header>
          <HeaderFields>
            <div>
              <FieldHead>
                <FieldLabel htmlFor="template-name">テンプレート名</FieldLabel>
                <Badge $tone="danger">必須</Badge>
              </FieldHead>
              <TextInput id="template-name" value={name} onChange={(e) => setName(e.target.value)} />
            </div>
            <div>
              <FieldHead>
                <FieldLabel htmlFor="template-folder">テンプレートフォルダ</FieldLabel>
                <Badge>任意</Badge>
              </FieldHead>
              <SelectWrap>
                <Select id="template-folder">
                  <option>未分類</option>
                </Select>
                <SelectArrows viewBox="0 0 12 24" fill="#444" aria-hidden="true">
                  <path d="M6 1L11 10H1ZM1 14H11L6 23Z" />
                </SelectArrows>
              </SelectWrap>
            </div>
          </HeaderFields>
          <DraftButton type="button">下書きを開く</DraftButton>
        </Header>

        <TabList role="tablist">
          {tabs.map((tab) => (
            <TabItem key={tab} role="presentation" $active={tab === active}>
              <TabButton
                type="button"
                role="tab"
                aria-selected={tab === active}
                $active={tab === active}
                onClick={() => setActive(tab)}
              >
                {tab}
              </TabButton>
              {tab === active && <TabHighlight />}
            </TabItem>
          ))}
        </TabList>

        <Panel role="tabpanel">
          <Notice>ピンを目的の場所へ合わせて下さい。</Notice>
          <Columns>
            <Side>
              <FieldHead>
                <FieldLabel htmlFor="place-title">タイトル</FieldLabel>
                <Badge>[name]対応</Badge>
              </FieldHead>
              <TextInput id="place-title" value={title} onChange={(e) => setTitle(e.target.value)} />
              <Counter>{title.length}/90文字</Counter>
              <AddressHead>
                <FieldLabel htmlFor="place-address">表示する住所</FieldLabel>
                <DetectButton type="button">ピンの住所を検出←</DetectButton>
              </AddressHead>
              <TextArea id="place-address" value={address} onChange={(e) => setAddress(e.target.value)} />
              <Counter>28/90文字</Counter>
            </Side>

            <MapFrame>
              <CityMap />
              <SearchInput type="text" aria-label="検索キーワード" placeholder="検索キーワードを入力" />
              <Controls>
                <ControlCard>
                  <ControlButton type="button" aria-label="全画面表示">
                    <FullscreenIcon />
                  </ControlButton>
                </ControlCard>
                <ControlCard $push>
                  <ControlButton type="button" aria-label="ストリートビュー">
                    <Pegman />
                  </ControlButton>
                </ControlCard>
                <ControlCard>
                  <ControlButton type="button" aria-label="拡大">
                    <svg width="30" height="30" viewBox="0 0 30 30" stroke="#666" strokeWidth="7" aria-hidden="true">
                      <path d="M0 15H30M15 0V30" />
                    </svg>
                  </ControlButton>
                  <Divider />
                  <ControlButton type="button" aria-label="縮小">
                    <svg width="30" height="30" viewBox="0 0 30 30" stroke="#666" strokeWidth="7" aria-hidden="true">
                      <path d="M0 15H30" />
                    </svg>
                  </ControlButton>
                </ControlCard>
              </Controls>
              <Logo aria-label="Google">
                <Letter $c="#4b83e8">G</Letter>
                <Letter $c="#dc4b3e">o</Letter>
                <Letter $c="#efb73a">o</Letter>
                <Letter $c="#4b83e8">g</Letter>
                <Letter $c="#42a45a">l</Letter>
                <Letter $c="#dc4b3e">e</Letter>
              </Logo>
              <Attribution>
                <Credit>
                  <button type="button">キーボード ショートカット</button>
                </Credit>
                <Credit>地図データ ©2023</Credit>
                <Credit>
                  <a href="#terms">利用規約</a>
                </Credit>
                <Credit>
                  <a href="#report">地図の誤りを報告する</a>
                </Credit>
              </Attribution>
            </MapFrame>
          </Columns>
        </Panel>
      </Page>
    </>
  );
}
